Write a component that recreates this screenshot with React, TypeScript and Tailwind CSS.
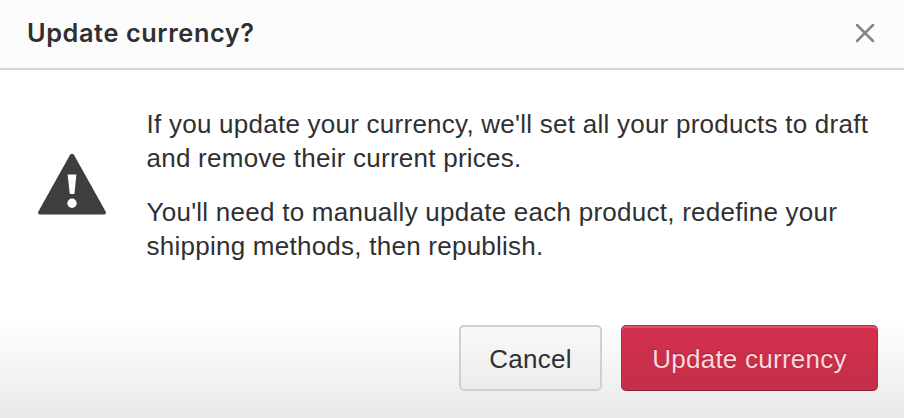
import React from 'react';

interface DialogButtonProps {
  label: string;
  className: string;
}

const paragraphs = [
  ["If you update your currency, we'll set all your products to draft", 'and remove their current prices.'],
  ["You'll need to manually update each product, redefine your", 'shipping methods, then republish.'],
];

const WarningIcon: React.FC = () => (
  <svg width="70" height="64" viewBox="0 0 70 64" aria-hidden="true">
    <path
      d="M32.8 3.2Q35 0.4 37.2 3.2L68.6 59.4Q69.7 62.2 67 62.4H3Q0.3 62.2 1.4 59.4Z"
      fill="#3e3e40"
    />
    <path d="M30.6 22.4H39.4L37.4 42H32.8Z" fill="#fff" />
    <circle cx="35" cy="51.2" r="4.7" fill="#fff" />
  </svg>
);

const DialogButton: React.FC<DialogButtonProps> = ({ label, className }) => (
  <button type="button" className={`h-[66px] rounded-[5px] pt-0.5 text-[26px] leading-none tracking-[0.25px] ${className}`}>
    {label}
  </button>
);

export default function App() {
  return (
    <div
      role="dialog"
      aria-label="Update currency?"
      className="flex h-[418px] w-[904px] flex-col overflow-hidden bg-white font-['Liberation_Sans',Arial,sans-serif] text-[#303032]"
    >
      <header className="flex h-[70px] shrink-0 items-center justify-between border-b-2 border-[#d5d5d5] bg-[#fcfcfc] pr-[29px] pb-[3px] pl-[27px]">
        <h1 className="font-[Inter,sans-serif] text-[25.3px] leading-8 font-semibold tracking-[0.6px]">Update currency?</h1>
        <button type="button" aria-label="Close">
          <svg width="20" height="20" viewBox="0 0 20 20" stroke="#858585" strokeWidth="2.5" strokeLinecap="round">
            <path d="M2 2L18 18M18 2L2 18" />
          </svg>
        </button>
      </header>

      <main className="flex flex-1 items-start pt-[37px] pl-[37px]">
        <div className="mt-[45px] w-[109.5px] shrink-0">
          <WarningIcon />
        </div>
        <div className="space-y-[19.5px] text-[26px] leading-[34px] tracking-[0.25px]">
          {paragraphs.map((lines) => (
            <p key={lines[0]}>
              {lines.map((line) => (
                <span key={line} className="block whitespace-nowrap">{line}</span>
              ))}
            </p>
          ))}
        </div>
      </main>

      <footer className="flex h-[104px] shrink-0 items-start justify-end gap-[19px] bg-linear-to-b from-white from-5% to-[#e9e9e9] pt-[11px] pr-[26px]">
        <DialogButton
          label="Cancel"
          className="w-[143px] border-2 border-[#d0d0d0] bg-linear-to-b from-[#f9f9f9] to-[#ececec]"
        />
        <DialogButton
          label="Update currency"
          className="w-[257px] border border-[#b52743] border-b-[#8f2037] bg-linear-to-b from-[#d3304d] to-[#c42e49] text-[#fbd9dc] shadow-[inset_0_2px_0_#e05068] [text-shadow:0_-1px_1px_#9d2139]"
        />
      </footer>
    </div>
  );
}
